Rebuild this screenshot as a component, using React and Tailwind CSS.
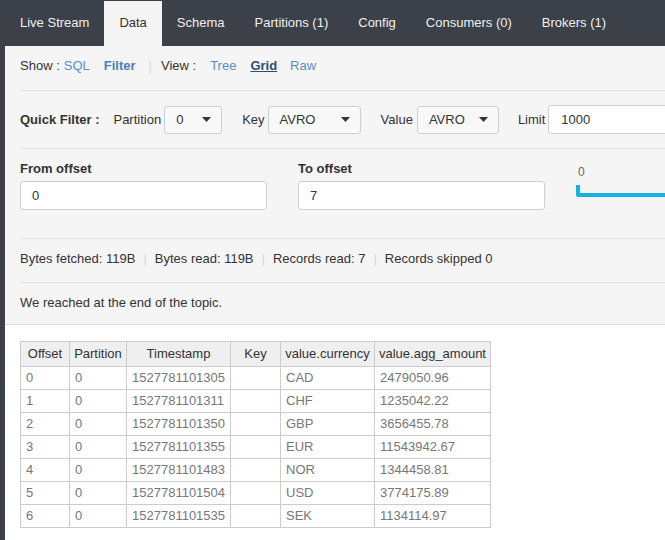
import React from 'react';

const tabs = ['Live Stream', 'Data', 'Schema', 'Partitions (1)', 'Config', 'Consumers (0)', 'Brokers (1)'];

const rows = [
  ['0', '0', '1527781101305', '', 'CAD', '2479050.96'],
  ['1', '0', '1527781101311', '', 'CHF', '1235042.22'],
  ['2', '0', '1527781101350', '', 'GBP', '3656455.78'],
  ['3', '0', '1527781101355', '', 'EUR', '11543942.67'],
  ['4', '0', '1527781101483', '', 'NOR', '1344458.81'],
  ['5', '0', '1527781101504', '', 'USD', '3774175.89'],
  ['6', '0', '1527781101535', '', 'SEK', '1134114.97'],
];

const columns = [
  { label: 'Offset', w: 'w-[49px]' },
  { label: 'Partition', w: 'w-[57px]' },
  { label: 'Timestamp', w: 'w-[104px]' },
  { label: 'Key', w: 'w-[50px]' },
  { label: 'value.currency', w: 'w-[94px]' },
  { label: 'value.agg_amount', w: 'w-[116px]' },
];

const Caret = () => (
  <svg width="9" height="5" viewBox="0 0 9 5" className="shrink-0">
    <path d="M0 0h9L4.5 5z" fill="#333" />
  </svg>
);

const Select = ({ value, width }) => (
  <div className={`flex items-center justify-between shrink-0 h-[28px] pl-[11px] pr-[10px] bg-[#f8f8f8] border border-[#cfcfcf] rounded-[3px] ${width}`}>
    <span>{value}</span>
    <Caret />
  </div>
);

const Sep = () => <span className="text-[#d6d6d6] mx-[8px]">|</span>;

const App = () => {
  return (
    <div className="flex min-h-[540px] bg-[#3b4049] font-['Liberation_Sans',Arial,sans-serif] text-[13px] leading-[16px] text-[#333]">
      <div className="w-[5px] shrink-0" />
      <div className="flex-1 min-w-0 overflow-hidden bg-white">
        {/* Tabs */}
        <div className="flex h-[46px] pt-[1px] bg-[#3b4049]">
          {tabs.map((tab) => (
            <div
              key={tab}
              className={`flex items-center px-[15px] pb-[2px] whitespace-nowrap ${
                tab === 'Data' ? 'bg-[#f5f5f5] text-[#333]' : 'text-[#f0f0f0]'
              }`}
            >
              {tab}
            </div>
          ))}
        </div>

        {/* Filter panel */}
        <div className="bg-[#f5f5f5] pl-[15px] border-b border-[#dcdcdc]">
          <div className="flex items-center h-[44px] pb-[4px] whitespace-nowrap">
            <span>Show :</span>
            <span className="text-[#5a8dc2] ml-[4px]">SQL</span>
            <span className="text-[#4a7fb5] font-bold ml-[14px]">Filter</span>
            <span className="text-[#d6d6d6] ml-[13px]">|</span>
            <span className="ml-[9px]">View :</span>
            <span className="text-[#5a8dc2] ml-[14px]">Tree</span>
            <span className="text-[#2c4f70] font-bold underline ml-[14px]">Grid</span>
            <span className="text-[#5a8dc2] ml-[13px]">Raw</span>
          </div>

          <div className="flex items-center h-[58px] border-t border-[#e2e2e2] whitespace-nowrap">
            <span className="font-bold">Quick Filter :</span>
            <span className="ml-[14px] mr-[3px]">Partition</span>
            <Select value="0" width="w-[58px]" />
            <span className="ml-[20px] mr-[3px]">Key</span>
            <Select value="AVRO" width="w-[93px]" />
            <span className="ml-[20px] mr-[4px]">Value</span>
            <Select value="AVRO" width="w-[82px]" />
            <span className="ml-[19px] mr-[3px]">Limit</span>
            <div className="flex items-center h-[29px] w-[200px] shrink-0 pl-[12px] bg-white border border-[#cfcfcf] rounded-[3px]">
              1000
            </div>
          </div>

          <div className="grid grid-cols-[247px_247px_1fr] gap-x-[31px] h-[90px] pt-[12px] border-t border-[#e2e2e2]">
            <div>
              <div className="font-bold">From offset</div>
              <div className="flex items-center h-[29px] mt-[4px] pl-[11px] bg-white border border-[#cfcfcf] rounded-[3px]">0</div>
            </div>
            <div>
              <div className="font-bold">To offset</div>
              <div className="flex items-center h-[29px] mt-[4px] pl-[11px] bg-white border border-[#cfcfcf] rounded-[3px]">7</div>
            </div>
            <div className="pt-[4px]">
              <div className="text-[12px] leading-[14px] text-[#666] pl-[2px]">0</div>
              <div className="h-[12px] mt-[6px] border-l-[4px] border-b-[4px] border-[#16b1e5] rounded-bl-[3px]" />
            </div>
          </div>

          <div className="flex items-center h-[44px] pb-[4px] border-t border-[#e2e2e2] whitespace-nowrap">
            <span>Bytes fetched: 119B</span>
            <Sep />
            <span>Bytes read: 119B</span>
            <Sep />
            <span>Records read: 7</span>
            <Sep />
            <span>Records skipped 0</span>
          </div>

          <div className="flex items-center h-[42px] pb-[2px] border-t border-[#e2e2e2]">
            We reached at the end of the topic.
          </div>
        </div>

        {/* Grid */}
        <div className="pl-[15px] pt-[16px] bg-white">
          <table className="border-collapse table-fixed w-[471px]">
            <colgroup>
              {columns.map((c) => (
                <col key={c.label} className={c.w} />
              ))}
            </colgroup>
            <thead>
              <tr className="bg-[#efefef] h-[25px]">
                {columns.map((c) => (
                  <th
                    key={c.label}
                    className="p-0 border border-[#cccccc] font-normal text-center text-[#333] whitespace-nowrap"
                  >
                    {c.label}
                  </th>
                ))}
              </tr>
            </thead>
            <tbody>
              {rows.map((row) => (
                <tr key={row[0]} className="h-[23px]">
                  {row.map((cell, i) => (
                    <td key={i} className="px-[5px] border border-[#cccccc] text-[#777] whitespace-nowrap">
                      {cell}
                    </td>
                  ))}
                </tr>
              ))}
            </tbody>
          </table>
        </div>
      </div>
    </div>
  );
};

export default App;
